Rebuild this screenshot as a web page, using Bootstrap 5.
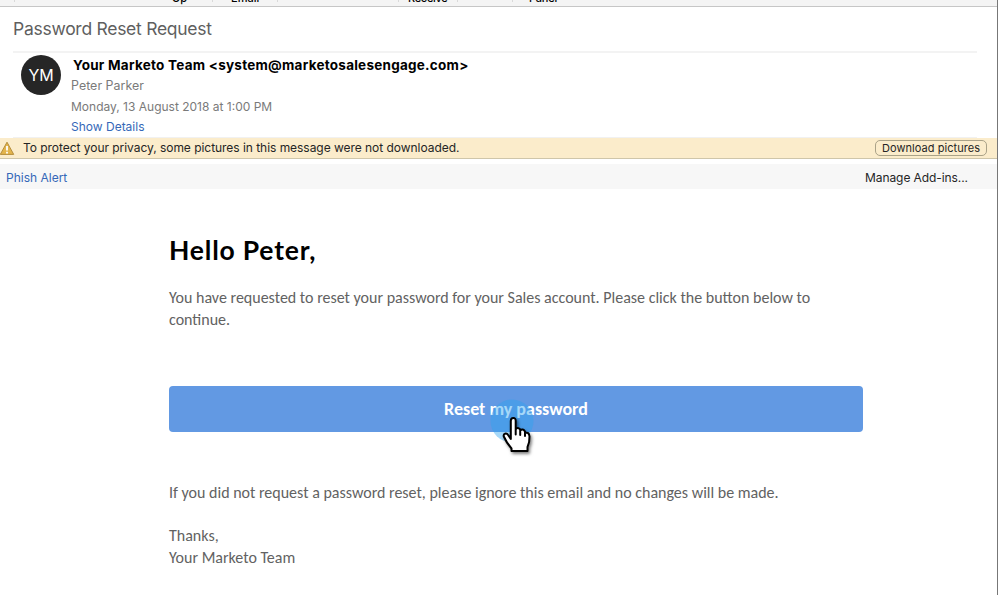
<!DOCTYPE html>
<html lang="en">
<head>
<meta charset="utf-8">
<meta name="viewport" content="width=device-width, initial-scale=1">
<title>Password Reset Request</title>
<link href="https://cdn.jsdelivr.net/npm/bootstrap@5.3.0/dist/css/bootstrap.min.css" rel="stylesheet">
<style>
body{font-family:Inter,"Liberation Sans",sans-serif;font-size:12px;color:#252525;background:#fff}
.mail-window{height:595px;border-right:1px solid #777}
/* bottom sliver of the toolbar */
.ribbon{height:7px;background:#f4f4f4;border-bottom:1px solid #c6c6c6;font-size:11px;font-weight:500;color:#000}
.ribbon i{position:absolute;top:0;width:1px;height:2px;background:#d9d9d9}
.ribbon span{position:absolute;top:-9px;line-height:14px;white-space:nowrap}
.tick-1{left:14px}.tick-2{left:212px}.tick-3{left:277px}.tick-4{left:398px}.tick-5{left:457px}.tick-6{left:512px}
.tool-up{left:172px}.tool-email{left:231px}.tool-receive{left:408px;letter-spacing:-.3px}.tool-panel{left:529px;letter-spacing:-.2px}
.subject{height:44px;font-size:17.5px;line-height:44px;letter-spacing:-.27px;color:#5f5f5f;margin-left:13px}
.header-block{height:87px;margin:0 20px 0 13px;border-top:2px solid #f3f3f3;border-bottom:1px solid #f1f1f1;padding:2px 0 0 8px}
.avatar{width:40px;height:40px;background:#262626;font-size:16px;letter-spacing:-.2px}
.meta{margin-left:10px;line-height:20.6px;color:#7a7a7a;white-space:nowrap}
.sender{font-size:13.5px;font-weight:700;letter-spacing:.25px;color:#000;line-height:20px;margin:0 0 1px 2px}
.recipient{font-size:12.4px;letter-spacing:.04px}
.mail-link{color:#3568b8;text-decoration:none}
.privacy{height:21px;background:#fbeccb;border-bottom:1px solid #cfc6aa;padding-right:10px;letter-spacing:-.04px}
.privacy svg{width:15px;height:15px;margin-right:8px}
.btn-pics{--bs-btn-padding-x:0;--bs-btn-padding-y:0;width:112px;height:16px;font-size:11px;line-height:13px;border:1px solid #aaa288;border-radius:5px;color:#252525;letter-spacing:.05px}
.addins{height:25px;margin-top:5px;background:#f7f7f7;padding:2px 29px 0 6px}
.manage{letter-spacing:-.08px}
.mail-body{font-family:Carlito,Lato,sans-serif;font-size:16px;line-height:22px;color:#626262;width:694px;margin-left:169px}
.mail-body h1{font-family:Lato,sans-serif;font-size:26.5px;line-height:32px;font-weight:700;letter-spacing:.8px;color:#000;margin:45px 0 21px}
.btn-reset{--bs-btn-padding-y:0;height:46px;background:#6299e3;border:0;border-radius:4px;font-size:18px;line-height:46px;font-weight:700;color:#fff;margin:55px 0 50px}
.btn-reset:hover{background:#6299e3;color:#fff}
.request-note{margin-bottom:21px}
.pointer{position:absolute;left:320px;top:10px;width:50px;height:70px}
</style>
<script src="https://cdn.jsdelivr.net/npm/bootstrap@5.3.0/dist/js/bootstrap.bundle.min.js"></script>
</head>
<body>
<main class="mail-window overflow-hidden">
  <div class="ribbon position-relative overflow-hidden">
    <i class="tick-1"></i><span class="tool-up">Up</span><i class="tick-2"></i>
    <span class="tool-email">Email</span><i class="tick-3"></i><i class="tick-4"></i>
    <span class="tool-receive">Receive</span><i class="tick-5"></i><i class="tick-6"></i>
    <span class="tool-panel">Panel</span>
  </div>
  <div class="subject">Password Reset Request</div>
  <header class="header-block d-flex align-items-start">
    <div class="avatar rounded-circle text-white d-flex align-items-center justify-content-center flex-shrink-0">YM</div>
    <div class="meta">
      <div class="sender">Your Marketo Team &lt;system@marketosalesengage.com&gt;</div>
      <div class="recipient">Peter Parker</div>
      <div>Monday, 13 August 2018 at 1:00 PM</div>
      <a class="mail-link" href="#">Show Details</a>
    </div>
  </header>
  <div class="privacy d-flex align-items-center">
    <svg viewBox="0 0 15 15"><path d="M7 1.2 13.7 13.4H.3Z" fill="#e3b44c" stroke="#b48d3c" stroke-linejoin="round"/><path d="M7 5v4.500M7 10.700v1.700" stroke="#fff" stroke-width="1.8"/></svg>
    <span>To protect your privacy, some pictures in this message were not downloaded.</span>
    <button class="btn btn-pics ms-auto">Download pictures</button>
  </div>
  <div class="addins d-flex align-items-center justify-content-between">
    <a class="mail-link" href="#">Phish Alert</a><span class="manage">Manage Add-ins...</span>
  </div>
  <article class="mail-body">
    <h1>Hello Peter,</h1>
    <p class="mb-0">You have requested to reset your password for your Sales account. Please click the button below to continue.</p>
    <div class="position-relative">
      <a class="btn btn-reset d-block" href="#">Reset my password</a>
      <svg class="pointer" viewBox="0 0 50 70">
        <defs><filter id="sh" x="-30%" y="-30%" width="170%" height="170%"><feDropShadow dx="1.5" dy="2" stdDeviation="1.5" flood-color="#000" flood-opacity=".5"/></filter></defs>
        <circle cx="23" cy="25" r="21.5" fill="#2ba3ee" fill-opacity=".42"/>
        <path transform="translate(.5 3)" filter="url(#sh)" d="M22 52V49.5C18.5 45.500 16 41.500 14.300 37.500C13.500 34.500 17 33.500 18.600 36L21.300 40V22Q21.300 19 23.800 19T26.200 22V30.500Q28 27.500 30.700 30.500V31.500Q33.500 29 35.500 32.500V34Q39.500 32.500 40 37.500Q40.200 43.500 38 48V52ZM26.200 30V35.500M30.700 31V36M35.500 33V37" fill="#fff" stroke="#000" stroke-width="2" stroke-linejoin="round" stroke-linecap="round"/>
      </svg>
    </div>
    <p class="request-note">If you did not request a password reset, please ignore this email and no changes will be made.</p>
    <p class="mb-0">Thanks,<br>Your Marketo Team</p>
  </article>
</main>
</body>
</html>
